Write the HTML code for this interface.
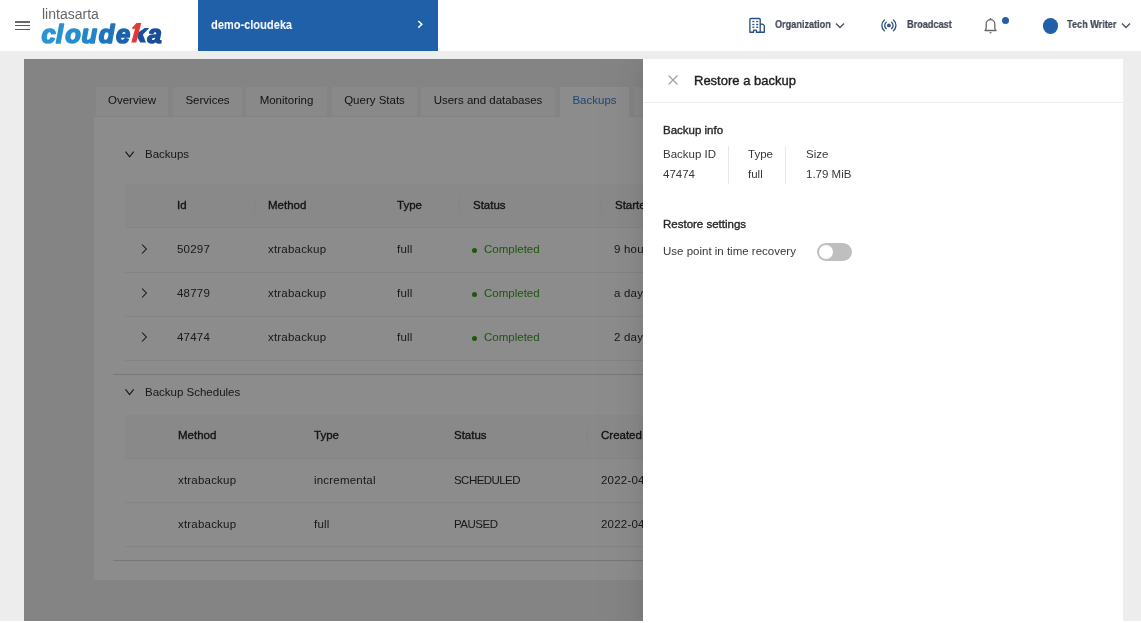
<!DOCTYPE html>
<html><head><meta charset="utf-8">
<style>
*{box-sizing:border-box;margin:0;padding:0}
html,body{width:1141px;height:623px;overflow:hidden;background:#fff;font-family:"Liberation Sans",sans-serif;}
.a{position:absolute;white-space:nowrap;line-height:1;will-change:transform}
#hdr{position:absolute;left:0;top:0;width:1141px;height:51px;background:#fff}
#bodybg{position:absolute;left:0;top:51px;width:1141px;height:570px;background:#ededed}
#cont{position:absolute;left:24px;top:59px;width:1099px;height:562px;background:#f0f0f0;overflow:hidden}
#ovl{position:absolute;left:24px;top:59px;width:1099px;height:562px;background:rgba(0,0,0,0.45)}
#drawer{position:absolute;left:643px;top:59px;width:480px;height:640px;background:#fff;box-shadow:-6px 0 16px -8px rgba(0,0,0,.08),-9px 0 28px 0 rgba(0,0,0,.05),-12px 0 48px 16px rgba(0,0,0,.03);clip-path:inset(0 0 0 -60px)}
.t{font-size:11.5px;color:#2e2e2e}
.c{letter-spacing:0.2px}
.hd{font-size:11.5px;color:#262626;-webkit-text-stroke:0.35px #262626}
.tab{position:absolute;top:86px;height:31px;background:#fafafa;border:1px solid #f0f0f0;border-bottom:none}
.tab.act{background:#fff;border-color:#f0f0f0}
.line{position:absolute;height:1px;background:#f0f0f0}
.vsep{position:absolute;width:1px;height:18px;background:#f0f0f0}
.hnav{font-size:11px;font-weight:bold;color:#3f4656;-webkit-text-stroke:0.2px #3f4656;transform:scaleX(0.83);transform-origin:0 0}
</style></head><body>
<div id="hdr">
 <div style="position:absolute;left:15px;top:0;width:15px;height:40px">
  <div style="position:absolute;left:0;top:21.2px;width:14.5px;height:1.4px;background:#6a6a6a"></div>
  <div style="position:absolute;left:0;top:24.9px;width:14.5px;height:1.4px;background:#5a5a5a"></div>
  <div style="position:absolute;left:0;top:28.9px;width:14.5px;height:1.4px;background:#5a5a5a"></div>
 </div>
 <div class="a" style="left:42px;top:7px;font-size:14px;color:#63676d">lintasarta</div>
 <svg id="logo" style="position:absolute;left:0;top:0" width="175" height="50" viewBox="0 0 175 50">
  <g font-family="Liberation Sans" font-weight="bold" font-style="italic" font-size="25.5" stroke-width="1.6" stroke-linejoin="round">
   <text x="41.5" y="42.5" fill="#2b95d4" stroke="#2b95d4">c</text>
   <text x="56" y="42.5" fill="#2a92d2" stroke="#2a92d2">l</text>
   <text x="65.3" y="42.5" fill="#278dcf" stroke="#278dcf">o</text>
   <text x="81.6" y="42.5" fill="#2286ca" stroke="#2286ca">u</text>
   <text x="98.8" y="42.5" fill="#1e76bd" stroke="#1e76bd">d</text>
   <text x="116" y="42.5" fill="#1c63ae" stroke="#1c63ae">e</text>
   <text x="147.4" y="42.5" fill="#1a4f9b" stroke="#1a4f9b">a</text>
  </g>
  <path d="M136.8 33.6 L144.7 28.1 L149.3 28.1 L142.9 34.6 L145.9 42.6 L140.3 42.6 L137.6 37.8 Z" fill="#1b4f9b"/>
  <path d="M131.3 42.6 L136.3 42.6 L141.2 23.1 L136.6 23.1 L132.2 27.4 L132.7 29.4 L135.1 28.6 Z" fill="#e53935"/>
</svg>
 <div style="position:absolute;left:198px;top:0;width:240px;height:51px;background:#2060a8">
  <div class="a" style="left:13px;top:18px;font-size:13px;font-weight:bold;color:#fff;transform:scaleX(0.85);transform-origin:0 0">demo-cloudeka</div>
  <svg style="position:absolute;left:218px;top:19px" width="8" height="12" viewBox="0 0 8 12"><path d="M2.3 2 L5.8 5.3 L2.3 8.6" fill="none" stroke="#fff" stroke-width="1.5"/></svg>
 </div>
 <svg style="position:absolute;left:744px;top:12px" width="28" height="26" viewBox="744 12 28 26">
  <path d="M749.9 32.2 V19.6 Q749.9 18.5 751 18.5 H759.1 Q760.2 18.5 760.2 19.6 V32.2 H756.4 V30.1 H753.6 V32.2 Z M760.2 23.9 Q764.3 24 764.3 26 V32.2 H760.2" fill="none" stroke="#2b4f82" stroke-width="1.35" stroke-linejoin="round"/>
  <g fill="#2b4f82"><rect x="752.3" y="20.9" width="2.1" height="1.3"/><rect x="756.2" y="20.9" width="2.1" height="1.3"/>
  <rect x="752.3" y="23.9" width="2.1" height="1.3"/><rect x="756.2" y="23.9" width="2.1" height="1.3"/>
  <rect x="752.3" y="26.6" width="2.1" height="1.3"/><rect x="756.2" y="26.6" width="2.1" height="1.3"/></g>
 </svg>
 <div class="a hnav" style="left:775px;top:19px">Organization</div>
 <svg style="position:absolute;left:835px;top:22px" width="10" height="7" viewBox="0 0 10 7"><path d="M1 1.5 L5 5.5 L9 1.5" fill="none" stroke="#4a5060" stroke-width="1.3"/></svg>
 <svg style="position:absolute;left:875px;top:14px" width="28" height="24" viewBox="875 14 28 24">
  <circle cx="888.9" cy="25.4" r="1.9" fill="#2b5592"/>
  <path d="M886.2 22.2 A4.2 4.2 0 0 0 886.2 28.6 M891.6 22.2 A4.2 4.2 0 0 1 891.6 28.6 M884.4 20.0 A7 7 0 0 0 884.4 30.8 M893.4 20.0 A7 7 0 0 1 893.4 30.8" fill="none" stroke="#2b4f82" stroke-width="1.3" stroke-linecap="round"/>
 </svg>
 <div class="a hnav" style="left:907px;top:19px">Broadcast</div>
 <svg style="position:absolute;left:983px;top:17px" width="15" height="18" viewBox="0 0 15 18">
  <path d="M2 13.5 H13 L11.8 11.5 V7 A4.3 4.3 0 0 0 3.2 7 V11.5 Z" fill="none" stroke="#666" stroke-width="1.3" stroke-linejoin="round"/>
  <path d="M7.5 1 V2.6" stroke="#666" stroke-width="1.3"/>
  <path d="M6 15.3 L7.5 16.8 L9 15.3 Z" fill="#666"/>
 </svg>
 <div style="position:absolute;left:1002px;top:17px;width:7px;height:7px;border-radius:50%;background:#2060a8"></div>
 <div style="position:absolute;left:1042.6px;top:18.1px;width:15.5px;height:15.5px;border-radius:50%;background:#2060a8"></div>
 <div class="a hnav" style="left:1067px;top:19px">Tech Writer</div>
 <svg style="position:absolute;left:1121px;top:22px" width="10" height="7" viewBox="0 0 10 7"><path d="M1 1.5 L5 5.5 L9 1.5" fill="none" stroke="#4a5060" stroke-width="1.3"/></svg>
</div>
<div id="bodybg"></div>
<div id="cont"></div>
<div class="tab" style="left:95px;width:74px"></div>
<div class="a t" style="left:95px;width:74px;text-align:center;top:95.27px;color:#262626">Overview</div>
<div class="tab" style="left:172px;width:71px"></div>
<div class="a t" style="left:172px;width:71px;text-align:center;top:95.27px;color:#262626">Services</div>
<div class="tab" style="left:245px;width:83px"></div>
<div class="a t" style="left:245px;width:83px;text-align:center;top:95.27px;color:#262626">Monitoring</div>
<div class="tab" style="left:331px;width:87px"></div>
<div class="a t" style="left:331px;width:87px;text-align:center;top:95.27px;color:#262626">Query Stats</div>
<div class="tab" style="left:420px;width:136px"></div>
<div class="a t" style="left:420px;width:136px;text-align:center;top:95.27px;color:#262626">Users and databases</div>
<div class="tab act" style="left:559px;width:71px"></div>
<div class="a t" style="left:559px;width:71px;text-align:center;top:95.27px;color:#3a7fd5">Backups</div>
<div class="tab" style="left:633px;width:88px"></div>
<div class="a t" style="left:633px;width:88px;text-align:center;top:95.27px;color:#262626">Settings</div>
<div class="line" style="left:94px;top:116px;width:1000px;background:#f0f0f0"></div>
<div style="position:absolute;left:94px;top:117px;width:1000px;height:463px;background:#fff"></div>
<div style="position:absolute;left:560px;top:116px;width:69px;height:1px;background:#fff"></div>
<svg style="position:absolute;left:125px;top:151px" width="10" height="8" viewBox="0 0 10 8"><path d="M0.5 0.6 L4.6 5.8 L8.7 0.6" fill="none" stroke="#262626" stroke-width="1.1"/></svg>
<div class="a t" style="left:144.8px;top:149px;font-size:11.5px;">Backups</div>
<div style="position:absolute;left:125px;top:184px;width:970px;height:43px;background:#fafafa"></div>
<div class="line" style="left:125px;top:227px;width:970px"></div>
<div class="line" style="left:125px;top:272px;width:970px"></div>
<div class="line" style="left:125px;top:316px;width:970px"></div>
<div class="line" style="left:125px;top:360px;width:970px"></div>
<div class="vsep" style="left:254px;top:197px"></div>
<div class="vsep" style="left:459px;top:197px"></div>
<div class="vsep" style="left:601px;top:197px"></div>
<div class="a hd" style="left:177px;top:199.57px;font-size:11.5px;">Id</div>
<div class="a hd" style="left:268px;top:199.57px;font-size:11.5px;">Method</div>
<div class="a hd" style="left:397px;top:199.57px;font-size:11.5px;">Type</div>
<div class="a hd" style="left:472.5px;top:199.57px;font-size:11.5px;">Status</div>
<div class="a hd" style="left:614.5px;top:199.57px;font-size:11.5px;">Started</div>
<svg style="position:absolute;left:140.2px;top:243.4px" width="9" height="12" viewBox="0 0 9 12"><path d="M2 1.5 L6.4 6 L2 10.5" fill="none" stroke="#262626" stroke-width="1.05"/></svg>
<div class="a t c" style="left:177.3px;top:243.67px;font-size:11.5px;">50297</div>
<div class="a t c" style="left:268px;top:243.67px;font-size:11.5px;">xtrabackup</div>
<div class="a t c" style="left:396.7px;top:243.67px;font-size:11.5px;">full</div>
<div style="position:absolute;left:472px;top:247.9px;width:5px;height:5px;border-radius:50%;background:#3c9a1e"></div>
<div class="a t" style="left:484.3px;top:243.67px;font-size:11.5px;color:#3c9a1e">Completed</div>
<div class="a t c" style="left:614.4px;top:243.67px;font-size:11.5px;">9 hours ago</div>
<svg style="position:absolute;left:140.2px;top:287.4px" width="9" height="12" viewBox="0 0 9 12"><path d="M2 1.5 L6.4 6 L2 10.5" fill="none" stroke="#262626" stroke-width="1.05"/></svg>
<div class="a t c" style="left:177.3px;top:287.67px;font-size:11.5px;">48779</div>
<div class="a t c" style="left:268px;top:287.67px;font-size:11.5px;">xtrabackup</div>
<div class="a t c" style="left:396.7px;top:287.67px;font-size:11.5px;">full</div>
<div style="position:absolute;left:472px;top:291.9px;width:5px;height:5px;border-radius:50%;background:#3c9a1e"></div>
<div class="a t" style="left:484.3px;top:287.67px;font-size:11.5px;color:#3c9a1e">Completed</div>
<div class="a t c" style="left:614.4px;top:287.67px;font-size:11.5px;">a day ago</div>
<svg style="position:absolute;left:140.2px;top:331.4px" width="9" height="12" viewBox="0 0 9 12"><path d="M2 1.5 L6.4 6 L2 10.5" fill="none" stroke="#262626" stroke-width="1.05"/></svg>
<div class="a t c" style="left:177.3px;top:331.67px;font-size:11.5px;">47474</div>
<div class="a t c" style="left:268px;top:331.67px;font-size:11.5px;">xtrabackup</div>
<div class="a t c" style="left:396.7px;top:331.67px;font-size:11.5px;">full</div>
<div style="position:absolute;left:472px;top:335.9px;width:5px;height:5px;border-radius:50%;background:#3c9a1e"></div>
<div class="a t" style="left:484.3px;top:331.67px;font-size:11.5px;color:#3c9a1e">Completed</div>
<div class="a t c" style="left:614.4px;top:331.67px;font-size:11.5px;">2 days ago</div>
<div class="line" style="left:113px;top:374px;width:980px;background:#d9d9d9"></div>
<svg style="position:absolute;left:125px;top:389px" width="10" height="8" viewBox="0 0 10 8"><path d="M0.5 0.4 L4.6 5.6 L8.7 0.4" fill="none" stroke="#262626" stroke-width="1.1"/></svg>
<div class="a t" style="left:144.8px;top:386.97px;font-size:11.5px;">Backup Schedules</div>
<div style="position:absolute;left:125px;top:415px;width:970px;height:43px;background:#fafafa"></div>
<div class="line" style="left:125px;top:458px;width:970px"></div>
<div class="line" style="left:125px;top:502px;width:970px"></div>
<div class="line" style="left:125px;top:546px;width:970px"></div>
<div class="vsep" style="left:587px;top:427px"></div>
<div class="a hd" style="left:178px;top:429.77px;font-size:11.5px;">Method</div>
<div class="a hd" style="left:313.5px;top:429.77px;font-size:11.5px;">Type</div>
<div class="a hd" style="left:454.2px;top:429.77px;font-size:11.5px;">Status</div>
<div class="a hd" style="left:600.8px;top:429.77px;font-size:11.5px;">Created</div>
<div class="a t c" style="left:178px;top:474.97px;font-size:11.5px;">xtrabackup</div>
<div class="a t c" style="left:313.5px;top:474.97px;font-size:11.5px;">incremental</div>
<div class="a t" style="left:454.2px;top:474.97px;font-size:11.5px;letter-spacing:-0.55px">SCHEDULED</div>
<div class="a t c" style="left:600.8px;top:474.97px;font-size:11.5px;">2022-04-12 10:00</div>
<div class="a t c" style="left:178px;top:518.97px;font-size:11.5px;">xtrabackup</div>
<div class="a t c" style="left:313.5px;top:518.97px;font-size:11.5px;">full</div>
<div class="a t" style="left:454.2px;top:518.97px;font-size:11.5px;letter-spacing:-0.5px">PAUSED</div>
<div class="a t c" style="left:600.8px;top:518.97px;font-size:11.5px;">2022-04-12 10:00</div>
<div class="line" style="left:113px;top:560px;width:980px;background:#d9d9d9"></div>
<div id="ovl"></div>
<div id="drawer"></div>
<svg style="position:absolute;left:667px;top:74px" width="12" height="12" viewBox="0 0 12 12"><path d="M1.5 1.5 L10.5 10.5 M10.5 1.5 L1.5 10.5" stroke="#a0a0a0" stroke-width="1.2"/></svg>
<div class="a hd" style="left:694.4px;top:74.20px;font-size:13px;color:#1f1f1f;-webkit-text-stroke:0.4px #1f1f1f">Restore a backup</div>
<div class="line" style="left:643px;top:102px;width:480px"></div>
<div class="a hd" style="left:662.7px;top:125px;font-size:11.5px;">Backup info</div>
<div class="a t" style="left:662.7px;top:148.67px;font-size:11.5px;color:#383838">Backup ID</div>
<div class="a t" style="left:662.7px;top:169px;font-size:11.5px;color:#383838">47474</div>
<div style="position:absolute;left:728px;top:146px;width:1px;height:38px;background:#e8e8e8"></div>
<div class="a t" style="left:748.3px;top:148.67px;font-size:11.5px;color:#383838">Type</div>
<div class="a t" style="left:748.3px;top:169px;font-size:11.5px;color:#383838">full</div>
<div style="position:absolute;left:785px;top:146px;width:1px;height:38px;background:#e8e8e8"></div>
<div class="a t" style="left:805.7px;top:148.67px;font-size:11.5px;color:#383838">Size</div>
<div class="a t" style="left:805.7px;top:169px;font-size:11.5px;color:#383838">1.79 MiB</div>
<div class="a hd" style="left:662.7px;top:218.97px;font-size:11.5px;">Restore settings</div>
<div class="a t" style="left:662.7px;top:246px;font-size:11.5px;color:#383838">Use point in time recovery</div>
<div style="position:absolute;left:817px;top:243px;width:35px;height:18px;border-radius:9px;background:#bfbfbf"></div>
<div style="position:absolute;left:819px;top:245px;width:14px;height:14px;border-radius:50%;background:#fff"></div>
<div style="position:absolute;left:0;top:621px;width:1141px;height:2px;background:#fff"></div>
</body></html>
